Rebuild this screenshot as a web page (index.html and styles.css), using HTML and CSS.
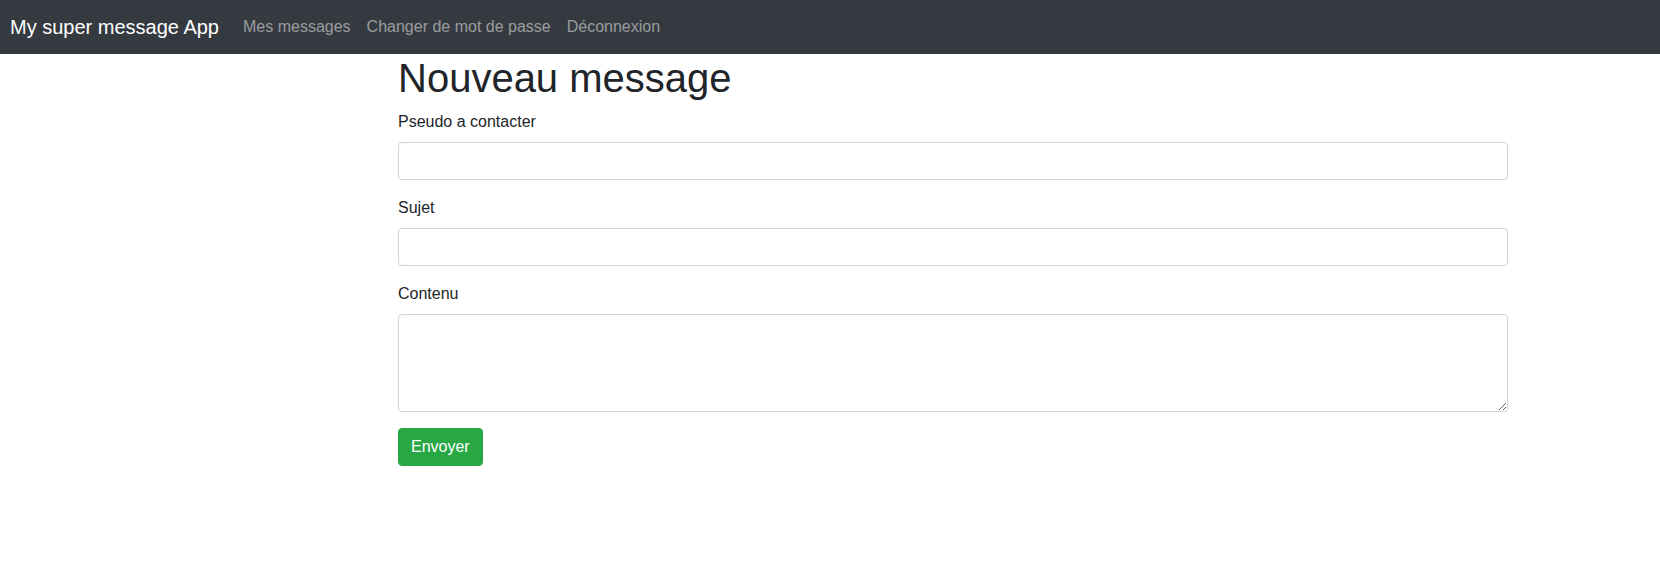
FILE: index.html
```html
<!DOCTYPE html>
<html lang="fr">
<head>
<meta charset="utf-8">
<title>Nouveau message</title>
<link rel="stylesheet" href="styles.css">
</head>
<body>
<nav class="navbar">
  <a class="brand" href="#">My super message App</a>
  <ul class="nav">
    <li><a class="nav-link" href="#">Mes messages</a></li>
    <li><a class="nav-link" href="#">Changer de mot de passe</a></li>
    <li><a class="nav-link" href="#">Déconnexion</a></li>
  </ul>
</nav>
<main class="main">
  <h1 class="title">Nouveau message</h1>
  <form class="form">
    <div class="form-group">
      <label class="label" for="pseudo">Pseudo a contacter</label>
      <input class="control" id="pseudo" type="text">
    </div>
    <div class="form-group">
      <label class="label" for="sujet">Sujet</label>
      <input class="control" id="sujet" type="text">
    </div>
    <div class="form-group">
      <label class="label" for="contenu">Contenu</label>
      <textarea class="control textarea" id="contenu"></textarea>
    </div>
    <button class="btn" type="button">Envoyer</button>
  </form>
</main>
</body>
</html>
```
FILE: styles.css
```css
* { box-sizing: border-box; }
html, body { margin: 0; padding: 0; }
body {
  font-family: "Liberation Sans", Arial, sans-serif;
  font-size: 16px;
  line-height: 1.5;
  color: #212529;
  background: #fff;
}
.navbar {
  height: 54px;
  background: #343a40;
  display: flex;
  align-items: center;
  padding: 0 10px;
}
.brand {
  font-size: 20px;
  color: #fff;
  text-decoration: none;
  margin-right: 16px;
  line-height: 30px;
}
.nav {
  display: flex;
  list-style: none;
  margin: 0;
  padding: 0;
}
.nav-link {
  display: block;
  padding: 8px;
  color: rgba(255,255,255,.5);
  text-decoration: none;
  line-height: 24px;
}
.main {
  padding-left: 398px;
  width: 1508px;
}
.title {
  margin: 0 0 8px;
  font-size: 40px;
  font-weight: 500;
  line-height: 1.2;
}
.form-group { margin-bottom: 16px; }
.label {
  display: inline-block;
  margin-bottom: 8px;
}
.control {
  display: block;
  width: 100%;
  height: 38px;
  padding: 6px 12px;
  font-family: inherit;
  font-size: 16px;
  line-height: 1.5;
  color: #495057;
  background: #fff;
  border: 1px solid #ced4da;
  border-radius: 4px;
  margin: 0;
}
.textarea {
  height: 98px;
  resize: vertical;
}
.btn {
  display: inline-block;
  font-family: inherit;
  font-size: 16px;
  line-height: 1.5;
  padding: 6px 12px;
  color: #fff;
  background: #28a745;
  border: 1px solid #28a745;
  border-radius: 4px;
  margin: 0;
}
```
